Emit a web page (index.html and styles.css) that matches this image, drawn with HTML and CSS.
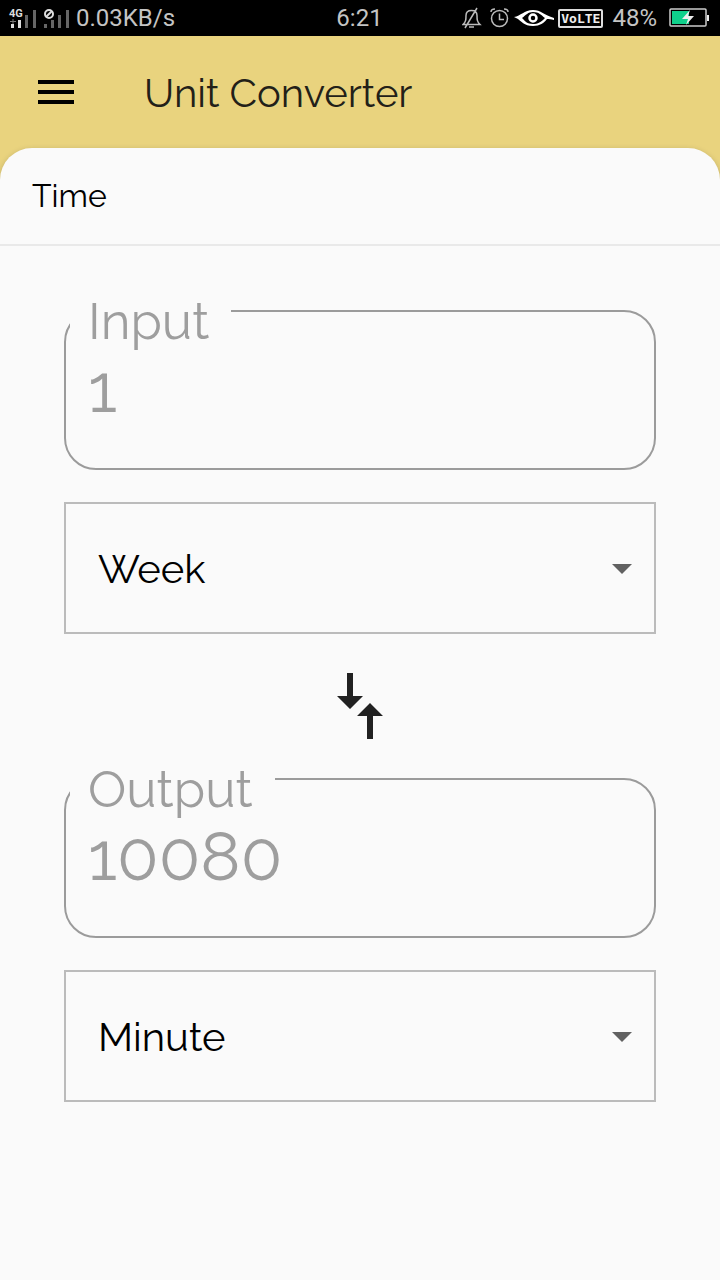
FILE: index.html
```html
<!DOCTYPE html>
<html lang="en">
<head>
<meta charset="utf-8">
<meta name="viewport" content="width=device-width, initial-scale=1">
<title>Unit Converter</title>
<link rel="stylesheet" href="styles.css">
</head>
<body>
<div class="status">
  <div class="status-left">
    <svg class="signal" width="62" height="24" viewBox="0 0 62 24" aria-hidden="true">
      <text class="network" x="0" y="9">4G</text>
      <path fill="#ddd" d="M2 16h3v4H2zM9 12h3v8H9z"/>
      <path stroke="#777" d="M1 13.500h6M4 11v5"/>
      <path fill="#666" d="M16 7h3v13h-3zM24 2h3v18h-3zM35 16h3v4h-3zM42 12h3v8h-3zM49 7h3v13h-3zM57 2h3v18h-3z"/>
      <circle cx="40" cy="6" r="4" fill="none" stroke="#ddd" stroke-width="2"/>
      <path stroke="#ddd" stroke-width="2" d="M37 9l6-6"/>
    </svg>
    <span>0.03KB/s</span>
  </div>
  <time class="clock">6:21</time>
  <div class="status-right">
    <svg width="92" height="24" viewBox="0 0 92 24" fill="none" aria-hidden="true">
      <g stroke="#bbb" stroke-width="1.500">
        <path d="M1 18.500h17c-3-3-3-5-3-9 0-3-2-5-5.500-5S4 6.500 4 9.500c0 4 0 6-3 9zM7 21h5M15 2L3 22"/>
        <circle cx="37.500" cy="12.500" r="8"/>
        <path d="M37.500 7.500v6h4.500M29 6c0-2 2-3 4-3M46 6c0-2-2-3-4-3"/>
      </g>
      <g stroke="#fff">
        <path fill="#fff" stroke="none" d="M52 11c7-1 10-7 19-7 8 0 11 5 21 8v2c-3-1-5-1-7-1-3 4-7 7-14 7-9 0-12-5-15-7z"/>
        <path fill="#000" stroke="none" d="M60 12c4-3 6-6 11-6 6 0 8 3 12 6-4 4-7 6-12 6-6 0-8-3-11-6z"/>
        <circle cx="71" cy="12" r="3.500" stroke-width="2.500"/>
      </g>
    </svg>
    <span class="volte">VoLTE</span>
    <span class="percent">48%</span>
    <svg class="battery" width="41" height="20" viewBox="0 0 41 20" aria-hidden="true">
      <rect x="1" y="1" width="36" height="17" rx="1" fill="none" stroke="#ccc" stroke-width="1.500"/>
      <path fill="#0fd08b" d="M3 3h17v13H3z"/>
      <path fill="#eee" d="M21 2l-8 9h6l-2 6 8-9h-6zM38 7h2v6h-2z"/>
    </svg>
  </div>
</div>
<header class="appbar">
  <button class="menu" type="button" aria-label="Menu">
    <svg width="36" height="24" viewBox="0 0 36 24"><path d="M0 0h36v4H0zM0 10h36v4H0zM0 20h36v4H0z"/></svg>
  </button>
  <h1 class="title">Unit Converter</h1>
</header>
<main class="sheet">
  <h2 class="category">Time</h2>
  <form class="converter">
    <div class="field">
      <label class="field-label" for="input">Input</label>
      <input class="field-value" id="input" type="text" inputmode="decimal" placeholder="1">
    </div>
    <div class="unit">
      <select class="unit-select" aria-label="Input unit"><option>Week</option><option>Minute</option></select>
      <svg class="caret" width="20" height="10" viewBox="0 0 20 10" aria-hidden="true"><path d="M0 0h20L10 10z"/></svg>
    </div>
    <button class="swap" type="button" aria-label="Swap units">
      <svg width="46" height="68" viewBox="0 0 46 68"><path d="M10 1h6v23h10L13 37 0 24h10zM30 67h6V44h10L33 31 20 44h10z"/></svg>
    </button>
    <div class="field">
      <label class="field-label" for="output">Output</label>
      <input class="field-value" id="output" type="text" placeholder="10080" readonly>
    </div>
    <div class="unit">
      <select class="unit-select" aria-label="Output unit"><option>Minute</option><option>Week</option></select>
      <svg class="caret" width="20" height="10" viewBox="0 0 20 10" aria-hidden="true"><path d="M0 0h20L10 10z"/></svg>
    </div>
  </form>
</main>
</body>
</html>
```
FILE: styles.css
```css
* { box-sizing: border-box; }
body {
  margin: 0;
  min-height: 100vh;
  display: flex;
  flex-direction: column;
  background: #e9d37e;
  color: #000;
  font-family: Raleway, Lato, sans-serif;
}
button { border: 0; padding: 0; background: none; cursor: pointer; }
svg { display: block; }

.status {
  display: grid;
  grid-template-columns: 1fr auto 1fr;
  align-items: center;
  height: 36px;
  padding: 0 10px 0 9px;
  background: #000;
  color: #c4c4c4;
  font: 400 24px/36px Roboto, sans-serif;
}
.status-left, .status-right { display: flex; align-items: center; }
.status-left { gap: 5px; }
.status-right { justify-content: flex-end; gap: 4px; }
.network { font: 700 11px Roboto, sans-serif; fill: #ddd; }
.signal { margin-top: 4px; overflow: visible; }
.volte {
  padding: 0 1px;
  border: 2px solid #ddd;
  border-radius: 2px;
  color: #eee;
  font: 700 13px/15px "DejaVu Sans Mono", monospace;
}
.percent { margin: 0 8px 0 5px; }

.appbar {
  display: flex;
  align-items: center;
  gap: 70px;
  height: 112px;
  padding: 0 38px;
}
.title { margin: 0; padding-top: 2px; color: #222018; font-size: 40px; font-weight: 400; line-height: 48px; }

.sheet {
  flex: 1;
  border-radius: 32px 32px 0 0;
  background: #fafafa;
  box-shadow: 0 2px 6px rgba(0, 0, 0, .2);
}
.category {
  margin: 0;
  padding: 28px 32px;
  border-bottom: 2px solid #e9e9e9;
  font-size: 32px;
  font-weight: 400;
  line-height: 40px;
}
.converter { display: flex; flex-direction: column; padding: 64px; }

.field {
  position: relative;
  height: 160px;
  margin-bottom: 32px;
  border: 2px solid #9b9b9b;
  border-radius: 32px;
}
.field-label {
  position: absolute;
  top: -21px;
  left: 4px;
  padding: 0 22px 0 18px;
  background: #fafafa;
  color: #9e9e9e;
  font-size: 51px;
  line-height: 60px;
}
.field-value {
  width: 100%;
  height: 100%;
  padding: 0 22px 4px;
  border: 0;
  background: none;
  color: #9e9e9e;
  font: 400 68px Raleway, Lato, sans-serif;
  font-variant-numeric: oldstyle-nums;
  outline: 0;
}
.field-value::placeholder { color: #9e9e9e; opacity: 1; }

.unit { position: relative; }
.unit-select {
  display: block;
  width: 100%;
  height: 132px;
  padding: 0 64px 0 32px;
  border: 2px solid #bbb;
  border-radius: 0;
  appearance: none;
  background: #fafafa;
  color: #000;
  font: 400 40px Raleway, Lato, sans-serif;
}
.caret { position: absolute; top: 62px; right: 24px; fill: #616161; pointer-events: none; }

.swap { align-self: center; padding: 38px 24px; fill: #212121; }
```
